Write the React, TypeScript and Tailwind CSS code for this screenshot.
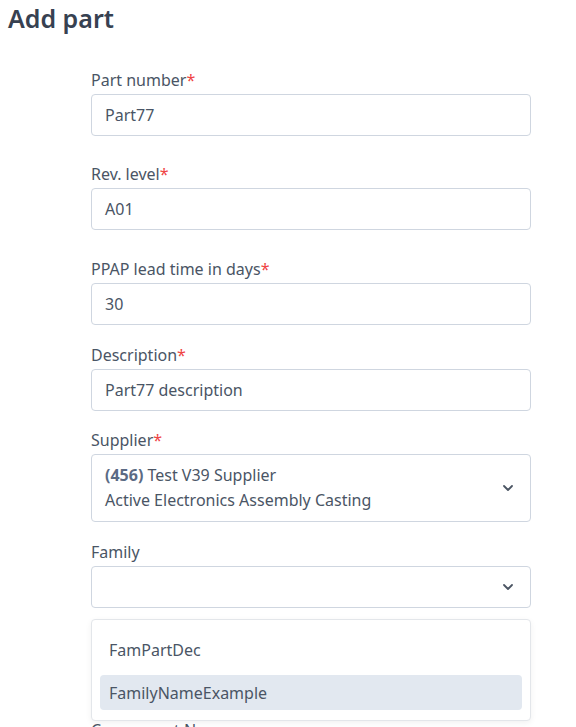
import React from "react";

const Chevron = () => (
  <svg width="10" height="6" viewBox="0 0 10 6" fill="none" className="shrink-0">
    <path d="M1 1L5 5L9 1" stroke="#4b5563" strokeWidth="1.8" strokeLinecap="round" strokeLinejoin="round" />
  </svg>
);

const Label = ({ text, required }: { text: string; required?: boolean }) => (
  <div className="h-6 leading-6 text-[16px] text-[#4a5565]">
    {text}
    {required && <span className="text-[#ef4444]">*</span>}
  </div>
);

const Input = ({ value }: { value: string }) => (
  <div className="mt-[2px] h-[42px] w-full rounded-[4px] border border-[#cfd6e0] bg-white px-[13px] flex items-center text-[16px] text-[#4a5565]">
    {value}
  </div>
);

export default function App() {
  return (
    <div
      className="min-h-[727px] w-[576px] bg-white overflow-hidden"
      style={{ fontFamily: '"Noto Sans", "Open Sans", sans-serif' }}
    >
      <h1 className="pl-2 pt-[2px] h-[32px] leading-[32px] text-[25px] font-semibold text-[#374151]">
        Add part
      </h1>
      <div className="ml-[91px] w-[440px] pt-[36px]">
        <Label text="Part number" required />
        <Input value="Part77" />

        <div className="mt-[26px]">
          <Label text="Rev. level" required />
          <Input value="A01" />
        </div>

        <div className="mt-[27px]">
          <Label text="PPAP lead time in days" required />
          <Input value="30" />
        </div>

        <div className="mt-[18px]">
          <Label text="Description" required />
          <Input value="Part77 description" />
        </div>

        <div className="mt-[17px]">
          <Label text="Supplier" required />
          <div className="mt-[2px] h-[68px] w-full rounded-[4px] border border-[#cfd6e0] bg-white pl-[13px] pr-[17px] flex items-center justify-between text-[16px] text-[#4a5565]">
            <div className="leading-[25px]">
              <div>
                <span className="font-bold text-[#5b6b84]">(456)</span> Test V39 Supplier
              </div>
              <div>Active Electronics Assembly Casting</div>
            </div>
            <Chevron />
          </div>
        </div>

        <div className="relative mt-[18px]">
          <Label text="Family" />
          <div className="mt-[2px] h-[42px] w-full rounded-[4px] border border-[#cfd6e0] bg-white pl-[13px] pr-[17px] flex items-center justify-end">
            <Chevron />
          </div>
          <div className="absolute left-0 right-0 top-[calc(100%+11px)] z-10 rounded-[4px] border border-[#e3e6ea] bg-white shadow-[0_2px_6px_rgba(0,0,0,0.06)] pt-3 pb-[10px] px-2 flex flex-col gap-2 text-[16px] text-[#4a5565]">
            <div className="h-[35px] flex items-center px-[9px] rounded-[4px]">FamPartDec</div>
            <div className="h-[35px] flex items-center px-[9px] rounded-[4px] bg-[#e2e8f0]">FamilyNameExample</div>
          </div>
        </div>

        <div className="mt-[110px]">
          <Label text="Component Name" />
        </div>
      </div>
    </div>
  );
}
